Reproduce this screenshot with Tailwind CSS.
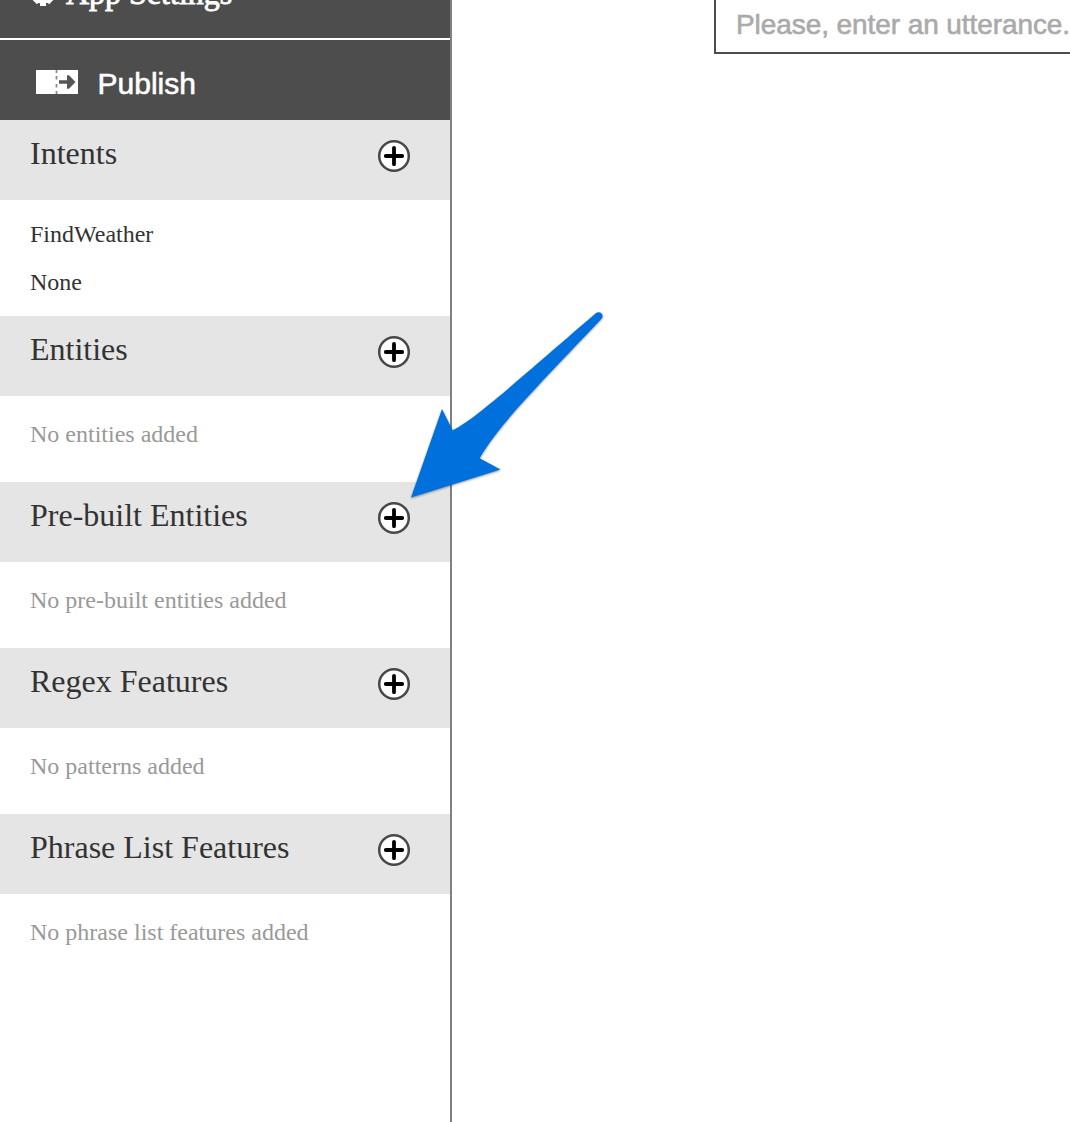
<!DOCTYPE html>
<html lang="en">
<head>
<meta charset="utf-8">
<title>App editor</title>
<script src="https://cdn.jsdelivr.net/npm/@tailwindcss/browser@4"></script>
</head>
<body class="relative flex h-[1122px] w-[1070px] overflow-hidden bg-white font-['Liberation_Serif',serif] text-[#333]">
<svg class="hidden">
  <symbol id="plus" viewBox="0 0 34 34">
    <circle cx="17" cy="17" r="14.800" fill="#fff" stroke="#484848" stroke-width="2.500"/>
    <path d="M17 8.800v16.400M8.800 17h16.400" stroke="#000" stroke-width="3.800" stroke-linecap="round"/>
  </symbol>
</svg>
<aside class="h-full w-[452px] shrink-0 border-r-2 border-[#808080]">
  <div class="flex h-10 items-start overflow-hidden border-b-2 border-white bg-[#4d4d4d] pl-[31px] text-white">
    <svg class="-mt-[18px] h-6 w-6 shrink-0" viewBox="0 0 24 24"><circle cx="12" cy="12" r="7" fill="none" stroke="#fff" stroke-width="6"/><path fill="none" stroke="#fff" stroke-width="6" d="M12 0v5M12 19v5M0 12h5M19 12h5M3.800 3.800l3.500 3.500M16.700 16.700l3.500 3.500M20.200 3.800l-3.500 3.500M7.300 16.700l-3.500 3.500"/></svg>
    <span class="-mt-[24px] ml-[11px] text-[32px] leading-[34px] [-webkit-text-stroke:0.9px_white]">App Settings</span>
  </div>
  <div class="flex h-20 items-center bg-[#4d4d4d] pl-9 text-white">
    <svg class="mt-1 h-6 w-[42px]" viewBox="0 0 42 24"><path fill="#fff" d="M0 0h42v24H0z"/><path d="M20.500 0v3M20.500 6v3.500M20.500 14v3.500M20.500 21v3" stroke="#888" stroke-width="1.700"/><path d="M23 10.300h8V5.200h2l6.500 6.800-6.500 6.800h-2v-5.100h-8z" fill="#555"/></svg>
    <span class="mt-[7px] ml-[19.500px] font-['Liberation_Sans',sans-serif] text-[30px] leading-9 [-webkit-text-stroke:0.6px_white]">Publish</span>
  </div>

  <h2 class="flex h-20 items-start justify-between bg-[#e5e5e5] pt-4 pr-[39px] pl-[30px] text-[32px] leading-[34px]">Intents<svg class="mt-[3px] h-[34px] w-[34px]"><use href="#plus"/></svg></h2>
  <ul class="h-[116px] py-[10px] pl-[30px] text-2xl leading-[48px]"><li>FindWeather</li><li>None</li></ul>

  <h2 class="flex h-20 items-start justify-between bg-[#e5e5e5] pt-4 pr-[39px] pl-[30px] text-[32px] leading-[34px]">Entities<svg class="mt-[3px] h-[34px] w-[34px]"><use href="#plus"/></svg></h2>
  <p class="h-[86px] pt-6 pl-[30px] text-2xl leading-7 text-[#999]">No entities added</p>

  <h2 class="flex h-20 items-start justify-between bg-[#e5e5e5] pt-4 pr-[39px] pl-[30px] text-[32px] leading-[34px]">Pre-built Entities<svg class="mt-[3px] h-[34px] w-[34px]"><use href="#plus"/></svg></h2>
  <p class="h-[86px] pt-6 pl-[30px] text-2xl leading-7 text-[#999]">No pre-built entities added</p>

  <h2 class="flex h-20 items-start justify-between bg-[#e5e5e5] pt-4 pr-[39px] pl-[30px] text-[32px] leading-[34px]">Regex Features<svg class="mt-[3px] h-[34px] w-[34px]"><use href="#plus"/></svg></h2>
  <p class="h-[86px] pt-6 pl-[30px] text-2xl leading-7 text-[#999]">No patterns added</p>

  <h2 class="flex h-20 items-start justify-between bg-[#e5e5e5] pt-4 pr-[39px] pl-[30px] text-[32px] leading-[34px]">Phrase List Features<svg class="mt-[3px] h-[34px] w-[34px]"><use href="#plus"/></svg></h2>
  <p class="h-[86px] pt-6 pl-[30px] text-2xl leading-7 text-[#999]">No phrase list features added</p>
</aside>
<main class="flex-1 pl-[262px]">
  <div class="h-[54px] overflow-hidden border-b-2 border-l-2 border-[#4d4d4d] pt-[9px] pl-5 font-['Liberation_Sans',sans-serif] text-[28px] leading-8 tracking-[-0.08px] whitespace-nowrap text-[#aaa] [-webkit-text-stroke:0.6px_#aaa]">Please, enter an utterance.</div>
</main>
<svg class="absolute top-[300px] left-[400px] h-[220px] w-[220px] drop-shadow-[0_1px_1px_rgb(0_0_0/0.4)]" viewBox="0 0 220 220"><path fill="#0070dc" d="M11 197.500L42 109l10.700 21.300C75 119 110 87 195.500 13.500c4-3.500 9.500 1 6 5.300C133 91 99 125 79.700 158.200L100.500 169.500z"/></svg>
</body>
</html>
